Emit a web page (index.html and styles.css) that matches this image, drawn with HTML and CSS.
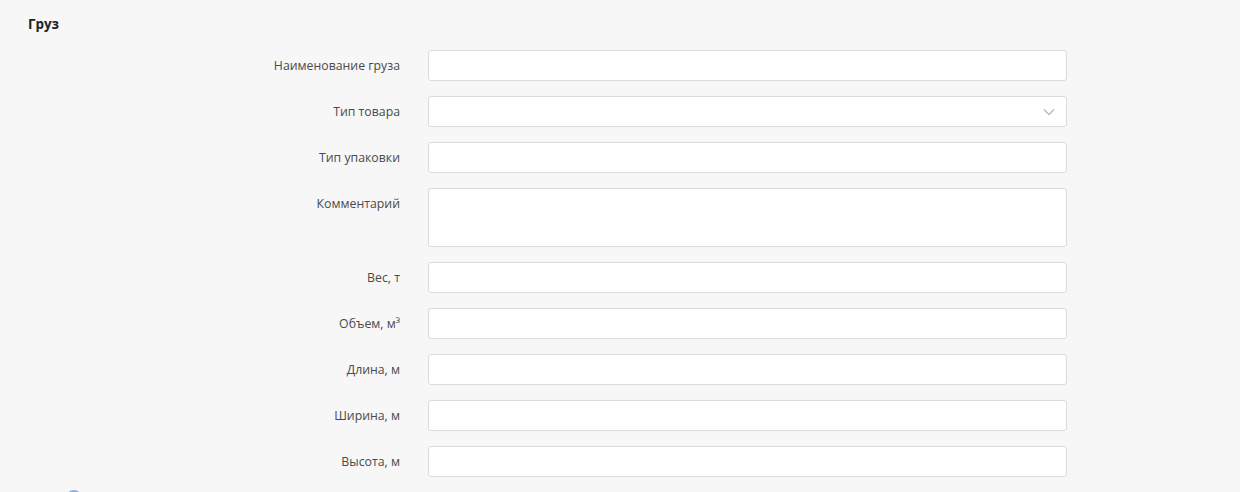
FILE: index.html
```html
<!DOCTYPE html>
<html lang="ru">
<head>
	<meta charset="UTF-8">
	<title>Груз</title>
	<link rel="stylesheet" href="styles.css">
</head>
<body>
	<div class="section">
		<h2 class="title">Груз</h2>
		<div class="form">
			<div class="row">
				<label>Наименование груза</label>
				<input type="text">
			</div>
			<div class="row">
				<label>Тип товара</label>
				<div class="select">
					<svg width="12" height="8" viewBox="0 0 12 8"><path d="M1 1.5l5 5 5-5" fill="none" stroke="#bbb" stroke-width="1.5"/></svg>
				</div>
			</div>
			<div class="row">
				<label>Тип упаковки</label>
				<input type="text">
			</div>
			<div class="row">
				<label>Комментарий</label>
				<textarea></textarea>
			</div>
			<div class="row">
				<label>Вес, т</label>
				<input type="text">
			</div>
			<div class="row">
				<label>Объем, м³</label>
				<input type="text">
			</div>
			<div class="row">
				<label>Длина, м</label>
				<input type="text">
			</div>
			<div class="row">
				<label>Ширина, м</label>
				<input type="text">
			</div>
			<div class="row">
				<label>Высота, м</label>
				<input type="text">
			</div>
		</div>
		<div class="next">
			<span class="circle"></span>
		</div>
	</div>
</body>
</html>
```
FILE: styles.css
```css
* {
	margin: 0;
	padding: 0;
	box-sizing: border-box;
}
body {
	background: #f7f7f7;
	font-family: "Open Sans", "Liberation Sans", sans-serif;
	font-size: 12.3px;
	color: #333;
}
.section {
	padding: 14px 0 0 28px;
}
.title {
	font-size: 13.4px;
	font-weight: 700;
	color: #222;
	line-height: 20px;
}
.form {
	margin-top: 16px;
	display: flex;
	flex-direction: column;
	gap: 15px;
}
.row {
	display: flex;
	align-items: flex-start;
	gap: 28px;
}
.row label {
	width: 372px;
	text-align: right;
	line-height: 31px;
	color: #4a4a4a;
}
.row input, .row textarea, .select {
	width: 639px;
	height: 31px;
	background: #fff;
	border: 1px solid #dcdcdc;
	border-radius: 3px;
	font-family: inherit;
	font-size: 13px;
}
.row textarea {
	height: 59px;
	resize: none;
}
.select {
	display: flex;
	align-items: center;
	justify-content: flex-end;
	padding-right: 11px;
}
.next {
	margin-top: 13px;
	padding-left: 38px;
}
.circle {
	display: block;
	width: 16px;
	height: 16px;
	border-radius: 50%;
	border: 2px solid #8fb0dc;
}
```
